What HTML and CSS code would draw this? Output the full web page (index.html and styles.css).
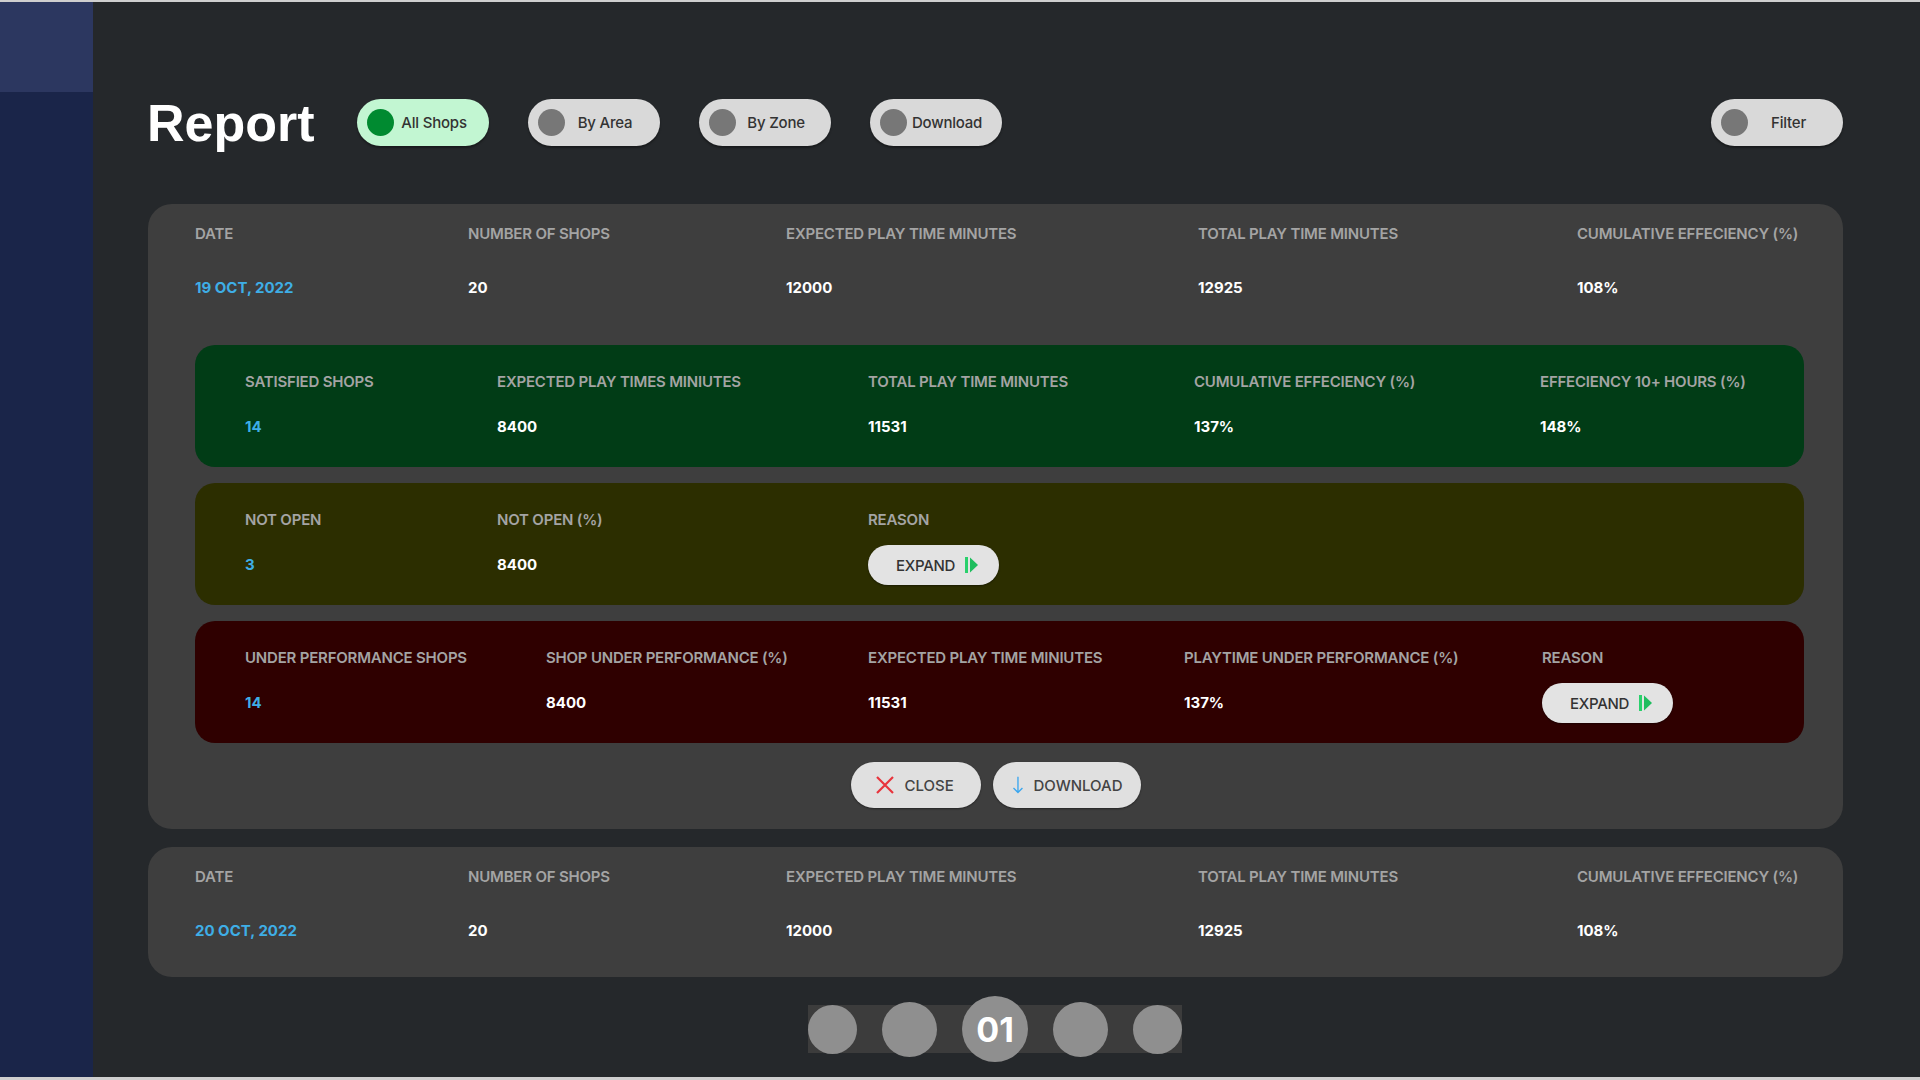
FILE: index.html
```html
<!DOCTYPE html>
<html lang="en">
<head>
<meta charset="utf-8">
<title>Report</title>
<link rel="stylesheet" href="styles.css">
</head>
<body>
<div class="app">
  <aside class="sidebar">
    <div class="sidebar-top"></div>
  </aside>
  <main class="main">
    <header class="header">
      <h1 class="title">Report</h1>
      <button class="pill pill-active"><span class="dot"></span><span class="pill-text">All Shops</span></button>
      <button class="pill"><span class="dot"></span><span class="pill-text">By Area</span></button>
      <button class="pill"><span class="dot"></span><span class="pill-text">By Zone</span></button>
      <button class="pill"><span class="dot"></span><span class="pill-text">Download</span></button>
      <button class="pill pill-filter"><span class="dot"></span><span class="pill-text">Filter</span></button>
    </header>

    <section class="card">
      <div class="summary">
        <div class="lbl">DATE</div>
        <div class="lbl">NUMBER OF SHOPS</div>
        <div class="lbl">EXPECTED PLAY TIME MINUTES</div>
        <div class="lbl">TOTAL PLAY TIME MINUTES</div>
        <div class="lbl">CUMULATIVE EFFECIENCY (%)</div>
        <div class="val blue">19 OCT, 2022</div>
        <div class="val">20</div>
        <div class="val">12000</div>
        <div class="val">12925</div>
        <div class="val">108%</div>
      </div>

      <div class="panels">
        <div class="panel panel-green">
          <div class="lbl">SATISFIED SHOPS</div>
          <div class="lbl">EXPECTED PLAY TIMES MINIUTES</div>
          <div class="lbl">TOTAL PLAY TIME MINUTES</div>
          <div class="lbl">CUMULATIVE EFFECIENCY (%)</div>
          <div class="lbl">EFFECIENCY 10+ HOURS (%)</div>
          <div class="val blue">14</div>
          <div class="val">8400</div>
          <div class="val">11531</div>
          <div class="val">137%</div>
          <div class="val">148%</div>
        </div>

        <div class="panel panel-olive">
          <div class="lbl">NOT OPEN</div>
          <div class="lbl">NOT OPEN (%)</div>
          <div class="lbl">REASON</div>
          <div class="lbl"></div>
          <div class="lbl"></div>
          <div class="val blue">3</div>
          <div class="val">8400</div>
          <div class="val">
            <button class="expand">EXPAND
              <svg class="play" width="14" height="18" viewBox="0 0 14 18"><rect x="0" y="1" width="3" height="16" fill="#2ad06c"/><polygon points="5,1.5 13,9 5,16.5" fill="#1fbd5e"/></svg>
            </button>
          </div>
          <div class="val"></div>
          <div class="val"></div>
        </div>

        <div class="panel panel-red">
          <div class="lbl">UNDER PERFORMANCE SHOPS</div>
          <div class="lbl">SHOP UNDER PERFORMANCE (%)</div>
          <div class="lbl">EXPECTED PLAY TIME MINIUTES</div>
          <div class="lbl">PLAYTIME UNDER PERFORMANCE (%)</div>
          <div class="lbl">REASON</div>
          <div class="val blue">14</div>
          <div class="val">8400</div>
          <div class="val">11531</div>
          <div class="val">137%</div>
          <div class="val">
            <button class="expand">EXPAND
              <svg class="play" width="14" height="18" viewBox="0 0 14 18"><rect x="0" y="1" width="3" height="16" fill="#2ad06c"/><polygon points="5,1.5 13,9 5,16.5" fill="#1fbd5e"/></svg>
            </button>
          </div>
        </div>
      </div>

      <div class="actions">
        <button class="action">
          <svg width="20" height="20" viewBox="0 0 20 20"><path d="M2 2 L18 18 M18 2 L2 18" stroke="#e8343c" stroke-width="2.2" fill="none"/></svg>
          <span>CLOSE</span>
        </button>
        <button class="action">
          <svg width="16" height="24" viewBox="0 0 16 24"><path d="M8 1 L8 22 M2 16 L8 22 L14 16" stroke="#3aa6ef" stroke-width="1.8" fill="none"/></svg>
          <span>DOWNLOAD</span>
        </button>
      </div>
    </section>

    <section class="card card-collapsed">
      <div class="summary">
        <div class="lbl">DATE</div>
        <div class="lbl">NUMBER OF SHOPS</div>
        <div class="lbl">EXPECTED PLAY TIME MINUTES</div>
        <div class="lbl">TOTAL PLAY TIME MINUTES</div>
        <div class="lbl">CUMULATIVE EFFECIENCY (%)</div>
        <div class="val blue">20 OCT, 2022</div>
        <div class="val">20</div>
        <div class="val">12000</div>
        <div class="val">12925</div>
        <div class="val">108%</div>
      </div>
    </section>

    <nav class="pager">
      <span class="page page-sm"></span>
      <span class="page page-md"></span>
      <span class="page page-active">01</span>
      <span class="page page-md"></span>
      <span class="page page-sm"></span>
    </nav>
  </main>
</div>
</body>
</html>
```

FILE: styles.css
```css
* { box-sizing: border-box; }

html, body {
  margin: 0;
  padding: 0;
  width: 1920px;
  height: 1080px;
  overflow: hidden;
}

body {
  background: #cfcfcf;
  padding-top: 2px;
  font-family: Inter, "Noto Sans", sans-serif;
}

.app {
  display: flex;
  height: 1075px;
  background: #25282b;
}

.sidebar {
  width: 93px;
  flex: none;
  background: #1a2549;
}

.sidebar-top {
  height: 90px;
  background: #2c3760;
}

.main {
  flex: 1;
  padding: 97px 77px 0 54px;
}

.header {
  display: flex;
  align-items: center;
  height: 47px;
  gap: 39px;
}

.title {
  margin: 0 3px 0 0;
  font-family: "Liberation Sans", Arial, sans-serif;
  font-weight: 700;
  font-size: 52px;
  color: #ffffff;
  line-height: 1;
}

.pill {
  display: flex;
  align-items: center;
  width: 132px;
  height: 47px;
  padding: 0 14px 0 10px;
  border: none;
  border-radius: 24px;
  background: #d9d9d9;
  box-shadow: 0 2px 2px rgba(0, 0, 0, 0.35);
  font-family: Inter, sans-serif;
  font-size: 15px;
  font-weight: 500;
  color: #333333;
}

.pill .dot {
  width: 27px;
  height: 27px;
  border-radius: 50%;
  background: #777777;
  flex: none;
}

.pill-text {
  flex: 1;
  text-align: center;
  letter-spacing: -0.2px;
}

.pill-active { background: #c2f6d2; }
.pill-active .dot { background: #008a30; }

.pill-filter { margin-left: auto; }

.card {
  margin-top: 58px;
  margin-left: 1px;
  background: #3e3e3e;
  border-radius: 24px;
  padding: 21px 39px 21px 47px;
}

.card-collapsed {
  margin-top: 18px;
  padding-bottom: 26px;
}

.summary {
  display: grid;
  grid-template-columns: 273px 318px 412px 379px 1fr;
  grid-template-rows: 18px 40px;
  row-gap: 25px;
  align-items: center;
}

.lbl {
  font-size: 15px;
  font-weight: 600;
  color: #a4a4a4;
  line-height: 18px;
  white-space: nowrap;
  letter-spacing: -0.2px;
}

.val {
  font-size: 15px;
  font-weight: 700;
  color: #ffffff;
  line-height: 18px;
  white-space: nowrap;
  display: flex;
  align-items: center;
}

.val.blue { color: #3eaee6; }

.panels {
  margin-top: 37px;
  display: flex;
  flex-direction: column;
  gap: 16px;
}

.panel {
  display: grid;
  grid-template-columns: 252px 371px 326px 346px 1fr;
  grid-template-rows: 18px 40px;
  row-gap: 16px;
  align-items: center;
  padding: 28px 20px 20px 50px;
  border-radius: 20px;
  height: 122px;
}

.panel-green { background: #013c16; }
.panel-olive { background: #2c2e00; }
.panel-red {
  background: #2f0000;
  grid-template-columns: 301px 322px 316px 358px 1fr;
}

.expand {
  display: flex;
  align-items: center;
  gap: 10px;
  width: 131px;
  height: 40px;
  padding: 0 0 0 28px;
  border: none;
  border-radius: 20px;
  background: #e3e3e3;
  box-shadow: 0 1px 2px rgba(0, 0, 0, 0.4);
  font-family: Inter, sans-serif;
  font-size: 15px;
  font-weight: 500;
  color: #333333;
  letter-spacing: -0.3px;
}

.actions {
  display: flex;
  justify-content: center;
  gap: 12px;
  margin: 19px 0 0 -8px;
}

.action {
  display: flex;
  align-items: center;
  gap: 10px;
  height: 46px;
  padding: 0 18px 0 24px;
  border: none;
  border-radius: 23px;
  background: #e0e0e0;
  box-shadow: 0 1px 2px rgba(0, 0, 0, 0.4);
  font-family: Inter, sans-serif;
  font-size: 15px;
  font-weight: 500;
  color: #444444;
}

.action:first-child { width: 130px; }
.action:last-child { width: 148px; padding-left: 19px; }

.pager {
  display: flex;
  align-items: center;
  gap: 25px;
  width: 374px;
  height: 48px;
  margin: 28px auto 0;
  background: #3c3c3c;
}

.page {
  flex: none;
  border-radius: 50%;
  background: #8f8f8f;
  display: flex;
  align-items: center;
  justify-content: center;
}

.page-sm { width: 49px; height: 49px; }
.page-md { width: 55px; height: 55px; }
.page-active {
  width: 66px;
  height: 66px;
  color: #ffffff;
  font-family: Inter, sans-serif;
  font-weight: 700;
  font-size: 34px;
}
```
